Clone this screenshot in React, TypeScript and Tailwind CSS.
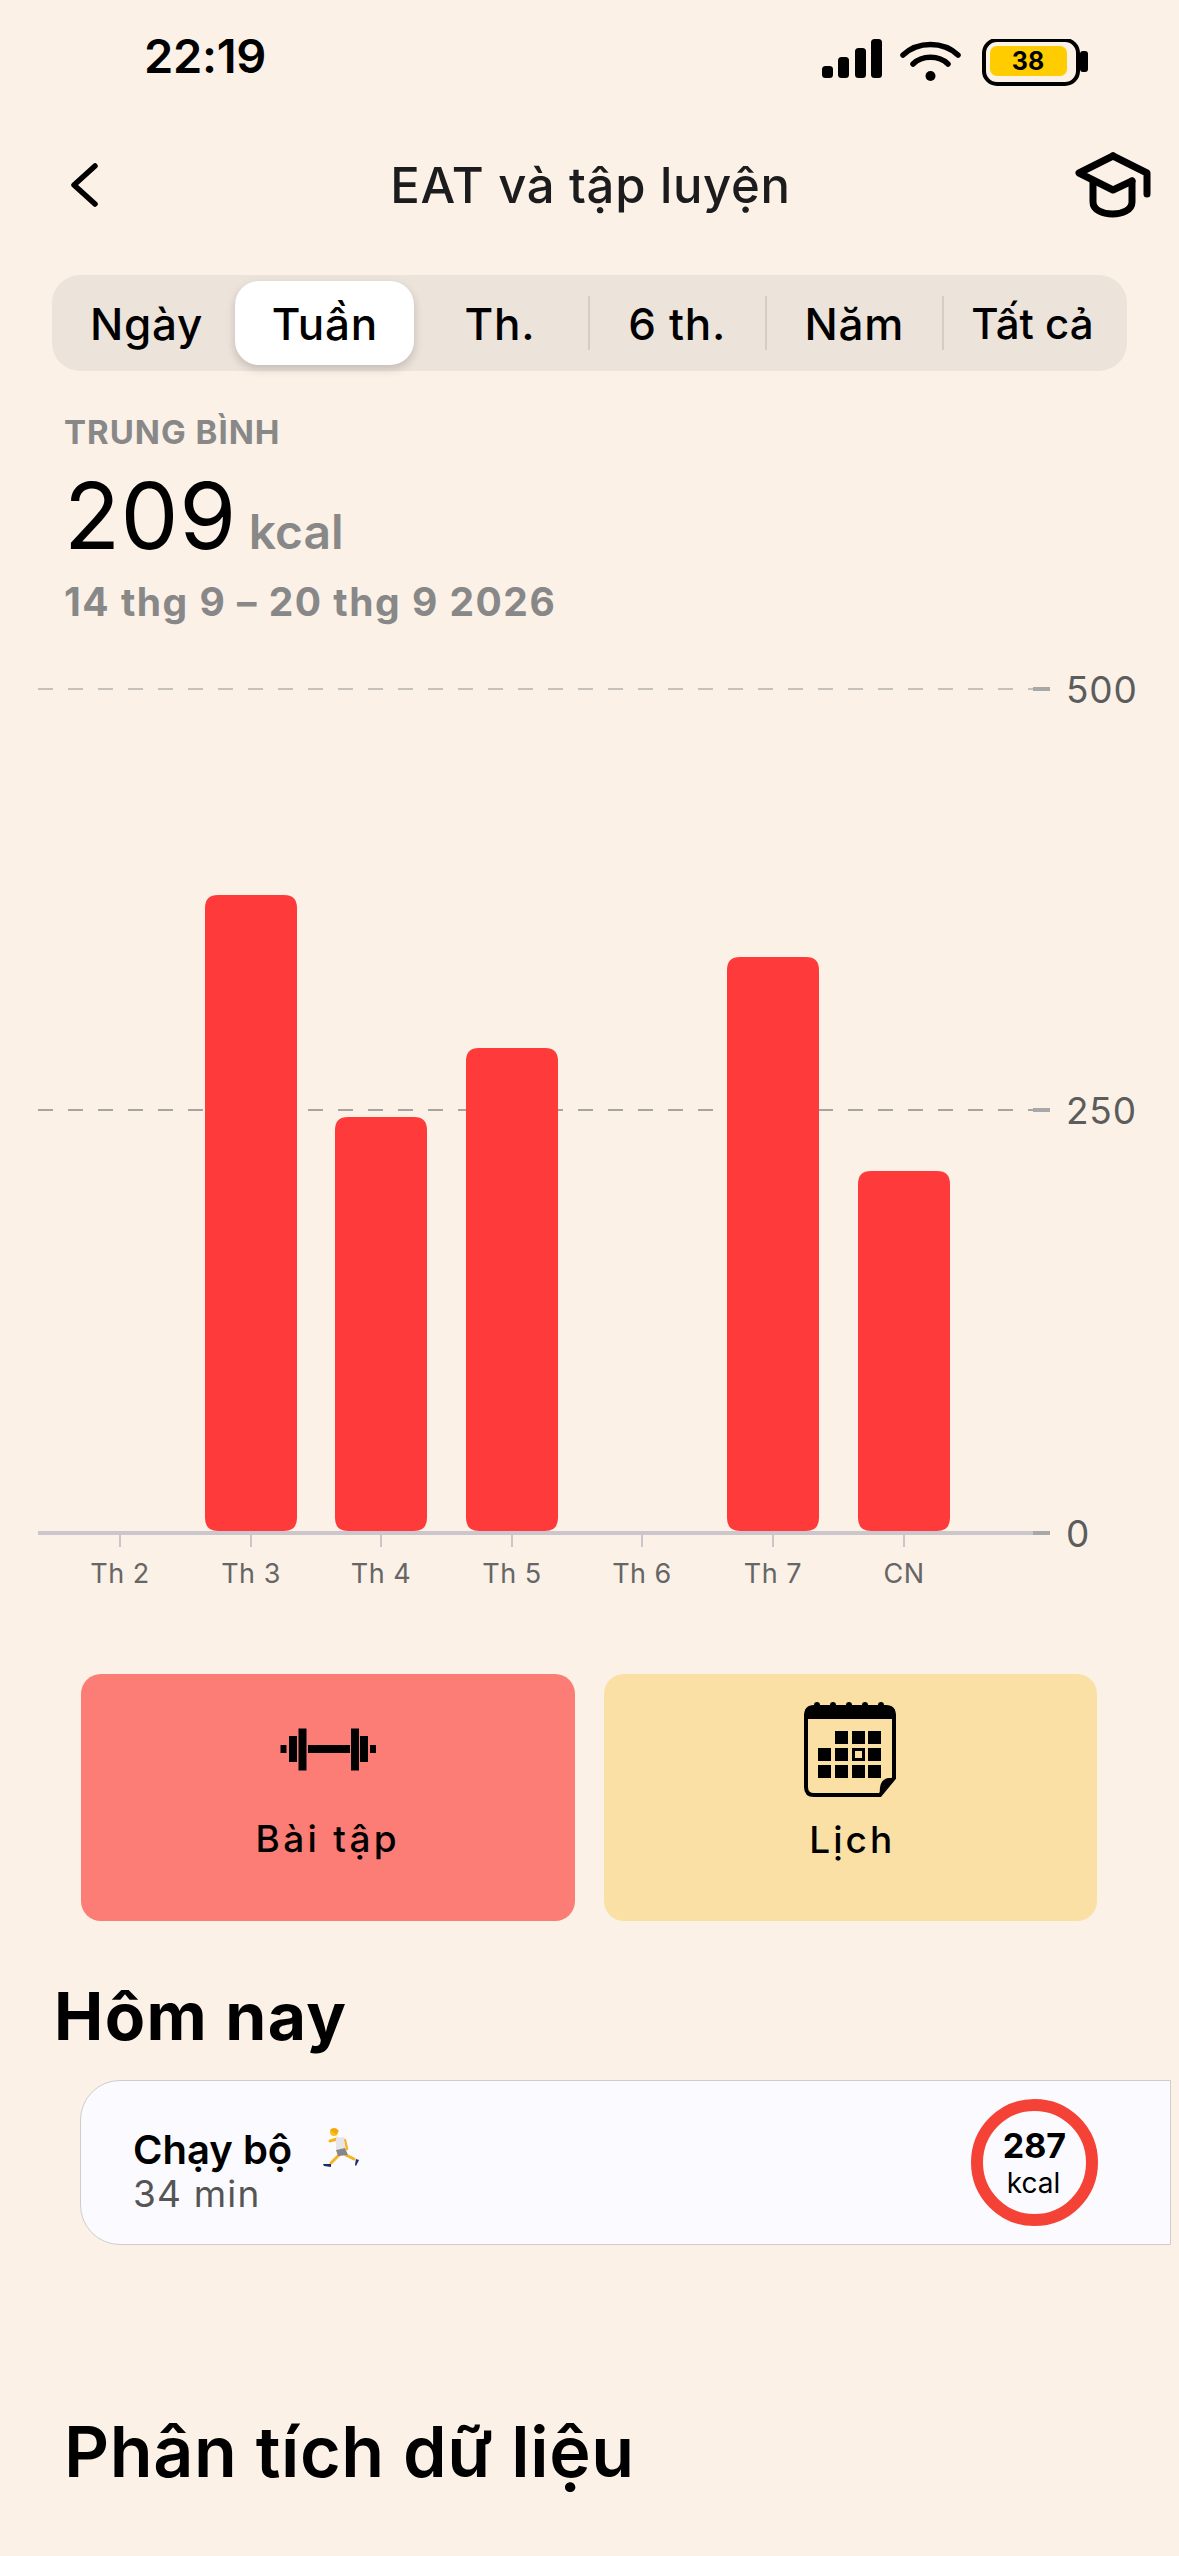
import React from 'react';

const tabs = ['Ngày', 'Tuần', 'Th.', '6 th.', 'Năm', 'Tất cả'];

const CHART_TOP = 660;
const AXIS_Y = 1533;

const days = [
    { label: 'Th 2', x: 120, top: 0 },
    { label: 'Th 3', x: 251, top: 895 },
    { label: 'Th 4', x: 381, top: 1117 },
    { label: 'Th 5', x: 512, top: 1048 },
    { label: 'Th 6', x: 642, top: 0 },
    { label: 'Th 7', x: 773, top: 957 },
    { label: 'CN', x: 904, top: 1171 },
];

const StatusIcons = () => (
    <svg width="272" height="50" viewBox="0 0 272 50" className="block">
        <rect x="0" y="27" width="11" height="12" rx="3.5" fill="#000" />
        <rect x="16" y="18" width="11" height="21" rx="3.5" fill="#000" />
        <rect x="33" y="9" width="11" height="30" rx="3.5" fill="#000" />
        <rect x="49" y="0" width="11" height="39" rx="3.5" fill="#000" />
        <path d="M81 16 C96 2 121 2 136 16" fill="none" stroke="#000" strokeWidth="5.5" strokeLinecap="round" />
        <path d="M91 25 C100 16 117 16 126 25" fill="none" stroke="#000" strokeWidth="5.5" strokeLinecap="round" />
        <circle cx="108.500" cy="37" r="5" fill="#000" />
        <rect x="162" y="1" width="94" height="44" rx="13" fill="none" stroke="#000" strokeWidth="4" />
        <rect x="168" y="7" width="77" height="30" rx="7" fill="#FFCC00" />
        <rect x="258" y="12" width="8" height="21" rx="3" fill="#000" />
        <text x="206" y="31" textAnchor="middle" fontSize="25" fontWeight="700" fill="#000" fontFamily="Inter, sans-serif">38</text>
    </svg>
);

const CapIcon = () => (
    <svg width="78" height="66" viewBox="0 0 78 66" className="block">
        <g fill="none" stroke="#000" strokeWidth="7" strokeLinecap="round" strokeLinejoin="round">
            <path d="M38 4 L72 21 V42" />
            <path d="M38 4 L4 21 L38 38 L57 29" />
            <path d="M18 30 V50 C18 66 57 66 57 50 V29" />
        </g>
    </svg>
);

const DumbbellIcon = () => (
    <svg width="96" height="43" viewBox="0 0 96 43" className="block">
        <rect x="0.500" y="17" width="6" height="8" fill="#000" />
        <rect x="9" y="8" width="8" height="26" fill="#000" />
        <rect x="18.500" y="0.500" width="8" height="42" fill="#000" />
        <rect x="28" y="17" width="42" height="8" fill="#000" />
        <rect x="71" y="0.500" width="8" height="42" fill="#000" />
        <rect x="80" y="8" width="8" height="26" fill="#000" />
        <rect x="90" y="17" width="6" height="8" fill="#000" />
    </svg>
);

const CalendarIcon = () => {
    const cells = [
        [17, 29], [34, 29], [50, 29],
        [0, 46], [17, 46], [50, 46],
        [0, 63], [17, 63], [34, 63], [50, 63],
    ];
    return (
        <svg width="92" height="96" viewBox="0 0 92 96" className="block">
            <path d="M2 14 H90 V76 L76 93 H10 Q2 93 2 85 Z" fill="none" stroke="#000" strokeWidth="4" />
            <path d="M0 14 Q0 3 10 3 H82 Q92 3 92 14 V17 H0 Z" fill="#000" />
            {[13, 29, 45, 61, 77].map(x => (
                <circle key={x} cx={x} cy="3" r="3" fill="#000" />
            ))}
            <g transform="translate(14 0)">
                {cells.map(([x, y]) => (
                    <rect key={`${x}-${y}`} x={x} y={y} width="13" height="13" fill="#000" />
                ))}
                <rect x="35.500" y="47.500" width="10" height="10" fill="none" stroke="#000" strokeWidth="3" />
            </g>
            <path d="M92 76 L76 95 Q74 78 84 76 Z" fill="#000" />
        </svg>
    );
};

const RunnerIcon = () => (
    <svg width="40" height="42" viewBox="22 26 40 42" className="block">
        <path d="M42 55 L33 64" stroke="#F5B51E" strokeWidth="3" strokeLinecap="round" fill="none" />
        <path d="M48 56 L56 60" stroke="#F5B51E" strokeWidth="3" strokeLinecap="round" fill="none" />
        <path d="M39 40 L32 42" stroke="#F5B51E" strokeWidth="3" strokeLinecap="round" fill="none" />
        <path d="M47 41 L49 50" stroke="#F5B51E" strokeWidth="2.500" strokeLinecap="round" fill="none" />
        <path d="M38 39 L46 38 L47 49 L38 51 Z" fill="#E6E6EA" />
        <path d="M38 51 L47 49 L50 56 L40 57 Z" fill="#85858A" />
        <circle cx="36" cy="33" r="4" fill="#F9C21B" />
        <path d="M32 31 Q37 27 41 32 L38 35 Z" fill="#EFA80F" />
        <path d="M25 65 L33 65 L33 68 L26 67 Z" fill="#1B2A6B" />
        <path d="M58 60 L61 61 L58 67 L57 66 Z" fill="#1B2A6B" />
    </svg>
);

const App: React.FC = () => {
    return (
        <div className="w-[1179px] h-[2556px] overflow-hidden bg-[#FBF1E7] font-['Inter',sans-serif] text-black">
            <div className="h-[110px] pt-[31px] pl-[144px] pr-[85px] flex justify-between items-start">
                <span className="text-[47px] font-semibold leading-[50px] tracking-[-0.3px]">22:19</span>
                <div className="pt-[8px]"><StatusIcons /></div>
            </div>

            <div className="h-[150px] pl-[70px] pr-[26px] flex items-center justify-between">
                <svg width="28" height="44" viewBox="0 0 28 44" className="block">
                    <path d="M25 3 L4 22 L25 41" fill="none" stroke="#000" strokeWidth="5.500" strokeLinecap="round" strokeLinejoin="round" />
                </svg>
                <h1 className="ml-[8px] text-[49px] font-medium leading-none text-[#1c1c1e] tracking-[0.7px]">EAT và tập luyện</h1>
                <CapIcon />
            </div>

            <div className="mt-[15px] mx-[52px] h-[96px] p-[6px] rounded-[28px] bg-[#ECE3DB] grid grid-cols-6">
                {tabs.map((tab, i) => (
                    <div key={tab} className={i === 1 ? 'flex items-center justify-center rounded-[24px] bg-white shadow-[0_4px_10px_rgba(0,0,0,0.18)] -mr-[2px]' : 'flex items-center justify-center'}>
                        <div className={i >= 2 && i <= 4
                            ? 'w-full h-[54px] pt-[2px] flex items-center justify-center border-r-2 border-[#D6CEC6]'
                            : 'w-full h-[54px] pt-[2px] flex items-center justify-center'}>
                            <span className={i === 5 ? 'text-[42px] font-medium leading-none' : 'text-[44px] font-medium leading-none tracking-[0.7px]'}>{tab}</span>
                        </div>
                    </div>
                ))}
            </div>

            <div className="pl-[64px] pt-[45px] h-[289px]">
                <div className="text-[33px] font-bold leading-none text-[#888888] tracking-[1px]">TRUNG BÌNH</div>
                <div className="mt-[21px] flex items-baseline gap-[12px]">
                    <span className="text-[92px] font-normal leading-none tracking-[0.5px]">209</span>
                    <span className="text-[48px] font-semibold leading-none text-[#888888]">kcal</span>
                </div>
                <div className="mt-[20px] text-[39px] font-bold leading-none text-[#888888] tracking-[1.5px]">14 thg 9 – 20 thg 9 2026</div>
            </div>

            <svg width="1179" height="960" viewBox={`0 ${CHART_TOP} 1179 960`} className="block">
                <line x1="38" x2="1035" y1="689" y2="689" stroke="#C6C1BA" strokeWidth="2" strokeDasharray="15 15" />
                <line x1="38" x2="1035" y1="1110" y2="1110" stroke="#A8A4A0" strokeWidth="2" strokeDasharray="15 15" />
                <line x1="1033" x2="1050" y1="689" y2="689" stroke="#A8A8A8" strokeWidth="4" />
                <line x1="1033" x2="1050" y1="1110" y2="1110" stroke="#A8A8A8" strokeWidth="4" />
                <line x1="38" x2="1033" y1={AXIS_Y} y2={AXIS_Y} stroke="#CBC6CB" strokeWidth="4" />
                <line x1="1033" x2="1050" y1={AXIS_Y} y2={AXIS_Y} stroke="#A8A8A8" strokeWidth="4" />
                {days.map(d => (
                    <g key={d.label}>
                        <line x1={d.x} x2={d.x} y1={AXIS_Y} y2={AXIS_Y + 14} stroke="#CBC6CB" strokeWidth="2" />
                        <text x={d.x} y="1583" textAnchor="middle" fontSize="27" fill="#666666" letterSpacing="0.5">{d.label}</text>
                        {d.top > 0 && <path d={`M${d.x - 46} ${AXIS_Y - 2} V${d.top + 13} Q${d.x - 46} ${d.top} ${d.x - 33} ${d.top} H${d.x + 33} Q${d.x + 46} ${d.top} ${d.x + 46} ${d.top + 13} V${AXIS_Y - 15} Q${d.x + 46} ${AXIS_Y - 2} ${d.x + 33} ${AXIS_Y - 2} H${d.x - 33} Q${d.x - 46} ${AXIS_Y - 2} ${d.x - 46} ${AXIS_Y - 15} Z`} fill="#FF3A3A" />}
                    </g>
                ))}
                <text x="1066" y="703" fontSize="37" fill="#5C5C5C" letterSpacing="0.8">500</text>
                <text x="1066" y="1124" fontSize="37" fill="#5C5C5C" letterSpacing="0.8">250</text>
                <text x="1066" y="1547" fontSize="37" fill="#5C5C5C" letterSpacing="0.8">0</text>
            </svg>

            <div className="mt-[54px] mx-[81px] w-[1016px] grid grid-cols-2 gap-[29px]">
                <div className="h-[247px] rounded-[20px] bg-[#FC7C76] flex flex-col items-center pt-[54px]">
                    <DumbbellIcon />
                    <span className="mt-[49px] text-[37px] font-medium leading-none tracking-[3.3px]">Bài tập</span>
                </div>
                <div className="h-[247px] rounded-[20px] bg-[#FBE0A6] flex flex-col items-center pt-[28px]">
                    <CalendarIcon />
                    <span className="mt-[23px] pl-[4px] text-[37px] font-medium leading-none tracking-[3px]">Lịch</span>
                </div>
            </div>

            <h2 className="mt-[62px] ml-[54px] text-[66px] font-bold leading-none tracking-[1.4px]">Hôm nay</h2>

            <div className="mt-[31px] ml-[80px] mr-[8px] h-[165px] pl-[52px] pr-[72px] flex items-center justify-between bg-[#FBFBFF] border border-[#CFCCCB] border-r-[#CFCCCB] rounded-l-[40px]">
                <div className="pt-[18px]">
                    <div className="flex items-center gap-[28px]">
                        <span className="text-[40px] font-semibold leading-[44px]">Chạy bộ</span>
                        <div className="-mt-[8px]"><RunnerIcon /></div>
                    </div>
                    <div className="mt-[1px] text-[37px] leading-[42px] text-[#555555] tracking-[1.2px]">34 min</div>
                </div>
                <div className="w-[127px] h-[127px] rounded-full border-[12px] border-[#F44336] flex flex-col items-center justify-center">
                    <span className="text-[34px] font-bold leading-[40px]">287</span>
                    <span className="pr-[2px] text-[28px] leading-[34px]">kcal</span>
                </div>
            </div>

            <h2 className="mt-[172px] ml-[64px] text-[70px] font-semibold leading-none tracking-[0.6px]">Phân tích dữ liệu</h2>
        </div>
    );
};

export default App;
